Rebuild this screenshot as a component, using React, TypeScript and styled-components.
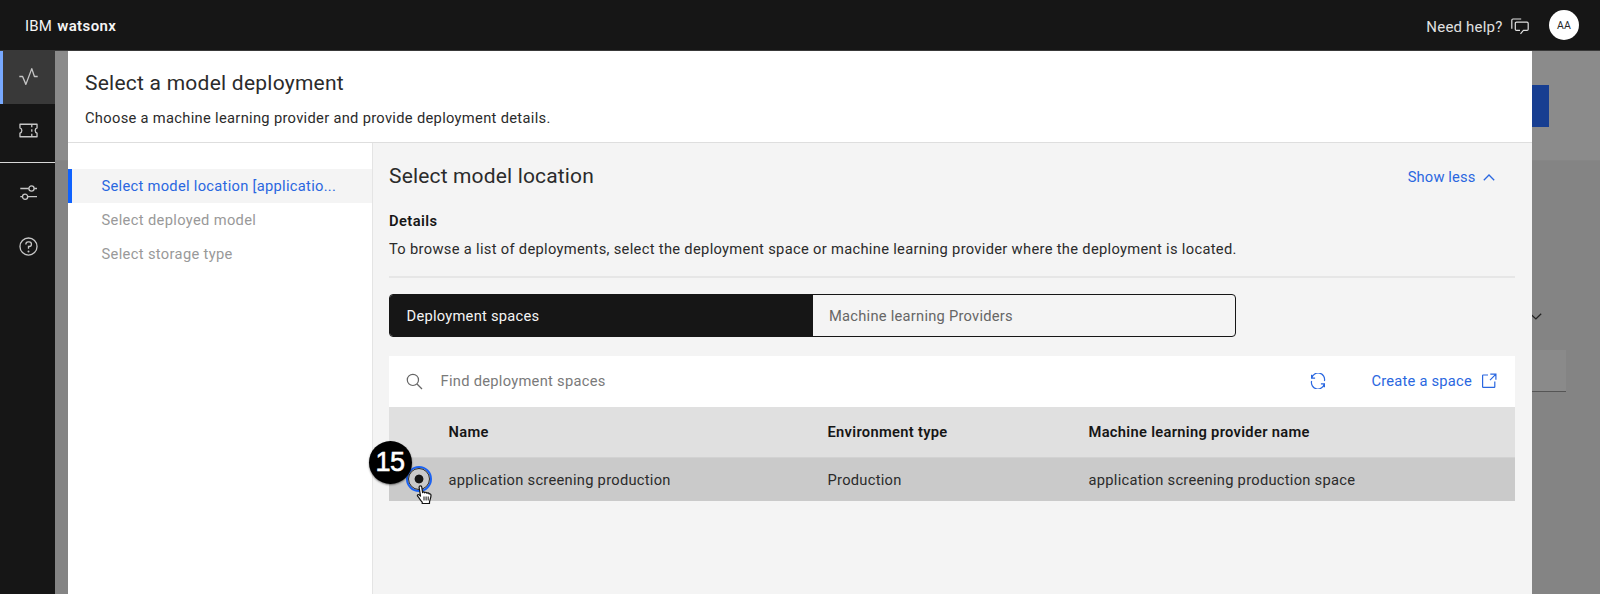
import React from 'react';
import styled, { createGlobalStyle } from 'styled-components';

const GlobalStyle = createGlobalStyle`
  * { box-sizing: border-box; }
  body {
    margin: 0;
    background: #848484;
    font-family: Roboto, "Liberation Sans", sans-serif;
    font-size: 14.7px;
    letter-spacing: 0.28px;
    color: #2b2b2b;
  }
  button { font: inherit; letter-spacing: inherit; color: inherit; background: none; border: 0; padding: 0; text-align: left; }
  h1, h2, h3, p { margin: 0; font-weight: 400; }
  svg { display: block; flex: none; }
`;

const Shell = styled.div`
  display: grid;
  grid-template: 51px 543px / 55px 1fr;
  height: 594px;
  overflow: hidden;
`;

const TopBar = styled.header`
  grid-column: 1 / -1;
  display: flex;
  align-items: center;
  padding: 0 21px 0 25px;
  background: #161616;
  border-bottom: 1px solid #393939;
  color: #f4f4f4;
`;

const Brand = styled.div`
  flex: 1;
  font-size: 15px;
  line-height: 20px;
  padding-top: 1px;
  letter-spacing: 0.1px;
  word-spacing: 1.5px;
  b { font-weight: 600; letter-spacing: 0.4px; }
`;

const HelpLink = styled.a`
  display: flex;
  align-items: center;
  gap: 8px;
  margin-right: 20.5px;
  padding-top: 3px;
  font-size: 15px;
  letter-spacing: 0.2px;
  color: #e0e0e0;
`;

const Avatar = styled.div`
  display: grid;
  place-items: center;
  width: 30px;
  height: 30px;
  border-radius: 50%;
  background: #fff;
  color: #262626;
  font-size: 10.5px;
  letter-spacing: 0.2px;
`;

const SideNav = styled.nav`
  display: flex;
  flex-direction: column;
  background: #161616;
  color: #c6c6c6;
`;

const NavItem = styled.a<{ $active?: boolean }>`
  display: flex;
  align-items: center;
  height: ${p => (p.$active ? 53 : 54)}px;
  padding-bottom: 2px;
  padding-left: ${p => (p.$active ? 14.5 : 18)}px;
  background: ${p => (p.$active ? '#393939' : 'transparent')};
  border-left: ${p => (p.$active ? '3px solid #78a9ff' : '0')};
`;

const NavRule = styled.hr`
  width: 100%;
  height: 1px;
  margin: 4px 0 3px;
  border: 0;
  background: #d8d8d8;
`;

const Workspace = styled.div`
  display: grid;
  grid-template-columns: 13px 1464px 1fr;
  min-width: 0;
`;

const Dimmed = styled.div`
  display: flex;
  flex-direction: column;
  background: #848484;
`;

const DimmedHeader = styled.div`
  height: 110px;
  padding-top: 34px;
  background: #8b8b8b;
  border-bottom: 1px solid #868686;
`;

const DimmedButton = styled.div`
  width: 17px;
  height: 42px;
  background: #173e91;
`;

const DimmedToggle = styled.div`
  display: flex;
  height: 7px;
  margin-top: 152px;
  color: #222;
  overflow: hidden;
`;

const DimmedField = styled.div`
  width: 34px;
  height: 42px;
  margin-top: 30px;
  background: #8a8a8a;
  border-bottom: 1px solid #555;
`;

const Modal = styled.section`
  display: grid;
  grid-template: 92px 1fr / 304.5px 1fr;
  background: #fff;
`;

const ModalHeader = styled.header`
  grid-column: 1 / -1;
  padding: 18px 17px 0;
  border-bottom: 1px solid #dedede;
`;

const Title = styled.h1`
  font-size: 21px;
  line-height: 28px;
  letter-spacing: 0.24px;
`;

const Intro = styled.p`
  margin-top: 11px;
  line-height: 20px;
  letter-spacing: 0.31px;
`;

const Steps = styled.nav`
  padding-top: 26px;
  border-right: 1px solid #e4e4e4;
`;

const Step = styled.button<{ $active?: boolean }>`
  display: block;
  width: 100%;
  height: 34px;
  padding-left: ${p => (p.$active ? 29.5 : 33.5)}px;
  border-left: ${p => (p.$active ? '4px solid #0f62fe' : '0')};
  background: ${p => (p.$active ? '#f4f4f4' : '#fff')};
  color: ${p => (p.$active ? '#2a67e0' : '#999')};
  letter-spacing: ${p => (p.$active ? 0.29 : 0.34)}px;
`;

const Content = styled.main`
  display: flex;
  flex-direction: column;
  padding: 18.5px 17px 0 16.5px;
  background: #f4f4f4;
`;

const SectionHead = styled.div`
  display: flex;
  align-items: center;
  justify-content: space-between;
  height: 28px;
  padding-right: 20.5px;
`;

const SectionTitle = styled.h2`
  font-size: 21px;
  line-height: 28px;
  letter-spacing: 0.16px;
`;

const LinkButton = styled.button<{ $gap: number; $track: number }>`
  display: flex;
  align-items: center;
  gap: ${p => p.$gap}px;
  color: #2a67e0;
  letter-spacing: ${p => p.$track}px;
`;

const ShowLess = styled(LinkButton)`
  margin-top: 3px;
`;

const DetailsTitle = styled.h3`
  margin-top: 21.5px;
  font-size: 14.7px;
  font-weight: 600;
  line-height: 20px;
  letter-spacing: 0.42px;
  color: #161616;
`;

const DetailsText = styled.p`
  margin-top: 8px;
  padding-bottom: 17px;
  line-height: 20px;
  letter-spacing: 0.315px;
  border-bottom: 2px solid #e6e6e6;
`;

const Switcher = styled.div`
  display: grid;
  grid-template-columns: 1fr 1fr;
  width: 847px;
  height: 43px;
  margin-top: 16px;
  border: 1px solid #161616;
  border-radius: 4px;
  overflow: hidden;
`;

const SwitchOption = styled.button<{ $selected?: boolean }>`
  padding-left: 16.5px;
  background: ${p => (p.$selected ? '#161616' : 'transparent')};
  color: ${p => (p.$selected ? '#f4f4f4' : '#666')};
  letter-spacing: 0.25px;
`;

const TableCard = styled.div`
  margin-top: 19px;
`;

const Toolbar = styled.div`
  display: flex;
  align-items: center;
  height: 51px;
  padding: 0 18px 1px 17px;
  background: #fff;
  color: #2a67e0;
`;

const SearchBox = styled.div`
  display: flex;
  flex: 1;
  align-items: center;
  gap: 17.5px;
  color: #7a7a7a;
  svg { color: #666; }
`;

const RefreshButton = styled.button`
  margin-right: 45px;
`;

const Row = styled.div<{ $head?: boolean }>`
  position: relative;
  display: grid;
  grid-template-columns: 59.5px 379px 261px 1fr;
  align-items: center;
  height: ${p => (p.$head ? 51 : 43)}px;
  background: ${p => (p.$head ? '#e0e0e0' : '#cacaca')};
  border-bottom: ${p => (p.$head ? '1px solid #d2d2d2' : '0')};
  font-weight: ${p => (p.$head ? 600 : 400)};
  letter-spacing: ${p => (p.$head ? 0.31 : 0.27)}px;
  color: ${p => (p.$head ? '#161616' : '#2b2b2b')};
`;

const Radio = styled.span`
  display: grid;
  place-items: center;
  width: 26px;
  height: 26px;
  margin: -1px 0 0 16.5px;
  border: 2px solid #1b62f2;
  border-radius: 50%;
  &::before {
    content: '';
    width: 20px;
    height: 20px;
    border: 1.5px solid #2b2b2b;
    border-radius: 50%;
    background: radial-gradient(circle, #161616 4px, transparent 4.8px);
  }
`;

const StepBadge = styled.span`
  position: absolute;
  left: -20.5px;
  top: -17.5px;
  display: grid;
  place-items: center;
  width: 43px;
  height: 43px;
  border-radius: 50%;
  background: #000;
  box-shadow: 0 1px 2px rgba(0, 0, 0, 0.5);
  color: #fff;
  font: 27px/43px "Liberation Sans", Arial, sans-serif;
  letter-spacing: -0.5px;
  -webkit-text-stroke: 0.6px #fff;
`;

const Pointer = styled.svg`
  position: absolute;
  left: 26.5px;
  top: 26.5px;
`;

const ActivityIcon = () => (
  <svg width="21" height="21" viewBox="0 0 32 32" fill="none" stroke="currentColor" strokeWidth="2" strokeLinejoin="round">
    <path d="M2 16h5l5 12L21 4l4 12h5" />
  </svg>
);

const TicketIcon = () => (
  <svg width="21" height="21" viewBox="0 0 32 32" fill="none" stroke="currentColor" strokeWidth="2">
    <path d="M3 6.5h26v5.6a4.1 4.1 0 0 0 0 7.8v5.6H3v-5.600a4.1 4.1 0 0 0 0-7.800z" strokeLinejoin="round" />
    <path d="M21 7v4M21 14v4M21 21v4" />
  </svg>
);

const AdjustIcon = () => (
  <svg width="21" height="21" viewBox="0 0 21 21" fill="none" stroke="currentColor" strokeWidth="1.3">
    <path d="M2.3 6.5h8.5M16.2 6.5h2.8M2.3 14.7h2.1M9.8 14.7H19" />
    <circle cx="13.5" cy="6.5" r="2.6" />
    <circle cx="7.1" cy="14.7" r="2.6" />
  </svg>
);

const QuestionIcon = () => (
  <svg width="21" height="21" viewBox="0 0 32 32" fill="none" stroke="currentColor" strokeWidth="2">
    <circle cx="16" cy="16" r="13" />
    <path d="M12 13v-.5A3.5 3.5 0 0 1 15.5 9H17a3.5 3.5 0 0 1 0 7h-1v3.500" />
    <circle cx="16" cy="23.5" r="1.5" fill="currentColor" stroke="none" />
  </svg>
);

const ChatIcon = () => (
  <svg width="18" height="18" viewBox="0 0 18 18" fill="none" stroke="currentColor" strokeWidth="1.2" strokeLinejoin="round">
    <path d="M.8 10.8V2.2Q.8 1 2 1h8.200" />
    <path d="M9.5 15.9l2.9-3.5H16q1.200 0 1.200-1.200V5.400q0-1.200-1.200-1.200H5.500q-1.200 0-1.200 1.200v5.800q0 1.200 1.200 1.200h3.500" />
  </svg>
);

const ChevronIcon = ({ up }: { up?: boolean }) => (
  <svg width="12" height="7" viewBox="0 0 12 7" fill="none" stroke="currentColor" strokeWidth="1.3">
    <path d={up ? 'M.8 6.2L6 1l5.2 5.2' : 'M-1.7 .7L3.9 5.9L9.2 .7'} />
  </svg>
);

const SearchIcon = () => (
  <svg width="17" height="17" viewBox="0 0 17 17" fill="none" stroke="currentColor" strokeWidth="1.2">
    <circle cx="6.9" cy="6.9" r="5.6" />
    <path d="M11 11l5 5" />
  </svg>
);

const RefreshIcon = () => (
  <svg width="16" height="16" viewBox="0 0 16 16" fill="none" stroke="currentColor" strokeWidth="1.2">
    <path d="M1.800 4.900A6.400 6.400 0 0 1 14.400 8M1.600 1.800v3.300h3.500" />
    <path d="M14.200 11.100A6.400 6.400 0 0 1 1.600 8M14.400 14.200v-3.300h-3.500" />
  </svg>
);

const LaunchIcon = () => (
  <svg width="16" height="16" viewBox="0 0 16 16" fill="none" stroke="currentColor" strokeWidth="1.2">
    <path d="M7 2H2.2Q1.600 2 1.600 2.600v11.200q0 .6.600.6h11q.6 0 .6-.6V8.500M9.300 1.200h5.600v5.600M14.700 1.400L9 7.100" />
  </svg>
);

const HandCursor = () => (
  <Pointer width="17" height="20" viewBox="0 0 17 20">
    <path
      d="M3.100 2.300c0-2 2.600-2 2.700 0l.8 5.400c.3-1.200 2-1.100 2.200.1.400-.9 2-.7 2.200.5.500-.8 2-.4 2.100.7.800-.5 1.900.1 1.900 1.200 0 3-1.200 4.400-1.500 6.900v1.400H6.200v-1.400c-1.500-1.800-2.800-3.700-4.600-5.900-.8-1.200.7-2.200 1.800-1.200l1.100 1z"
      fill="#fff"
      stroke="#111"
      strokeWidth="1.2"
      strokeLinejoin="round"
    />
    <path d="M8 11.500v4M10.100 11.500v4M12.200 11.500v4" stroke="#111" strokeWidth="1" />
  </Pointer>
);

export default function App() {
  return (
    <>
      <GlobalStyle />
      <Shell>
        <TopBar>
          <Brand>IBM <b>watsonx</b></Brand>
          <HelpLink>Need help?<ChatIcon /></HelpLink>
          <Avatar>AA</Avatar>
        </TopBar>
        <SideNav>
          <NavItem $active><ActivityIcon /></NavItem>
          <NavItem><TicketIcon /></NavItem>
          <NavRule />
          <NavItem><AdjustIcon /></NavItem>
          <NavItem><QuestionIcon /></NavItem>
        </SideNav>
        <Workspace>
          <Dimmed><DimmedHeader /></Dimmed>
          <Modal>
            <ModalHeader>
              <Title>Select a model deployment</Title>
              <Intro>Choose a machine learning provider and provide deployment details.</Intro>
            </ModalHeader>
            <Steps>
              <Step $active>Select model location [applicatio...</Step>
              <Step>Select deployed model</Step>
              <Step>Select storage type</Step>
            </Steps>
            <Content>
              <SectionHead>
                <SectionTitle>Select model location</SectionTitle>
                <ShowLess $gap={7} $track={0.15}>Show less<ChevronIcon up /></ShowLess>
              </SectionHead>
              <DetailsTitle>Details</DetailsTitle>
              <DetailsText>
                To browse a list of deployments, select the deployment space or machine learning provider where the deployment is located.
              </DetailsText>
              <Switcher>
                <SwitchOption $selected>Deployment spaces</SwitchOption>
                <SwitchOption>Machine learning Providers</SwitchOption>
              </Switcher>
              <TableCard>
                <Toolbar>
                  <SearchBox><SearchIcon />Find deployment spaces</SearchBox>
                  <RefreshButton aria-label="Refresh"><RefreshIcon /></RefreshButton>
                  <LinkButton $gap={9} $track={0.23}>Create a space<LaunchIcon /></LinkButton>
                </Toolbar>
                <Row $head>
                  <span />
                  <span>Name</span>
                  <span>Environment type</span>
                  <span>Machine learning provider name</span>
                </Row>
                <Row>
                  <Radio />
                  <span>application screening production</span>
                  <span>Production</span>
                  <span>application screening production space</span>
                  <StepBadge>15</StepBadge>
                  <HandCursor />
                </Row>
              </TableCard>
            </Content>
          </Modal>
          <Dimmed>
            <DimmedHeader><DimmedButton /></DimmedHeader>
            <DimmedToggle><ChevronIcon /></DimmedToggle>
            <DimmedField />
          </Dimmed>
        </Workspace>
      </Shell>
    </>
  );
}
